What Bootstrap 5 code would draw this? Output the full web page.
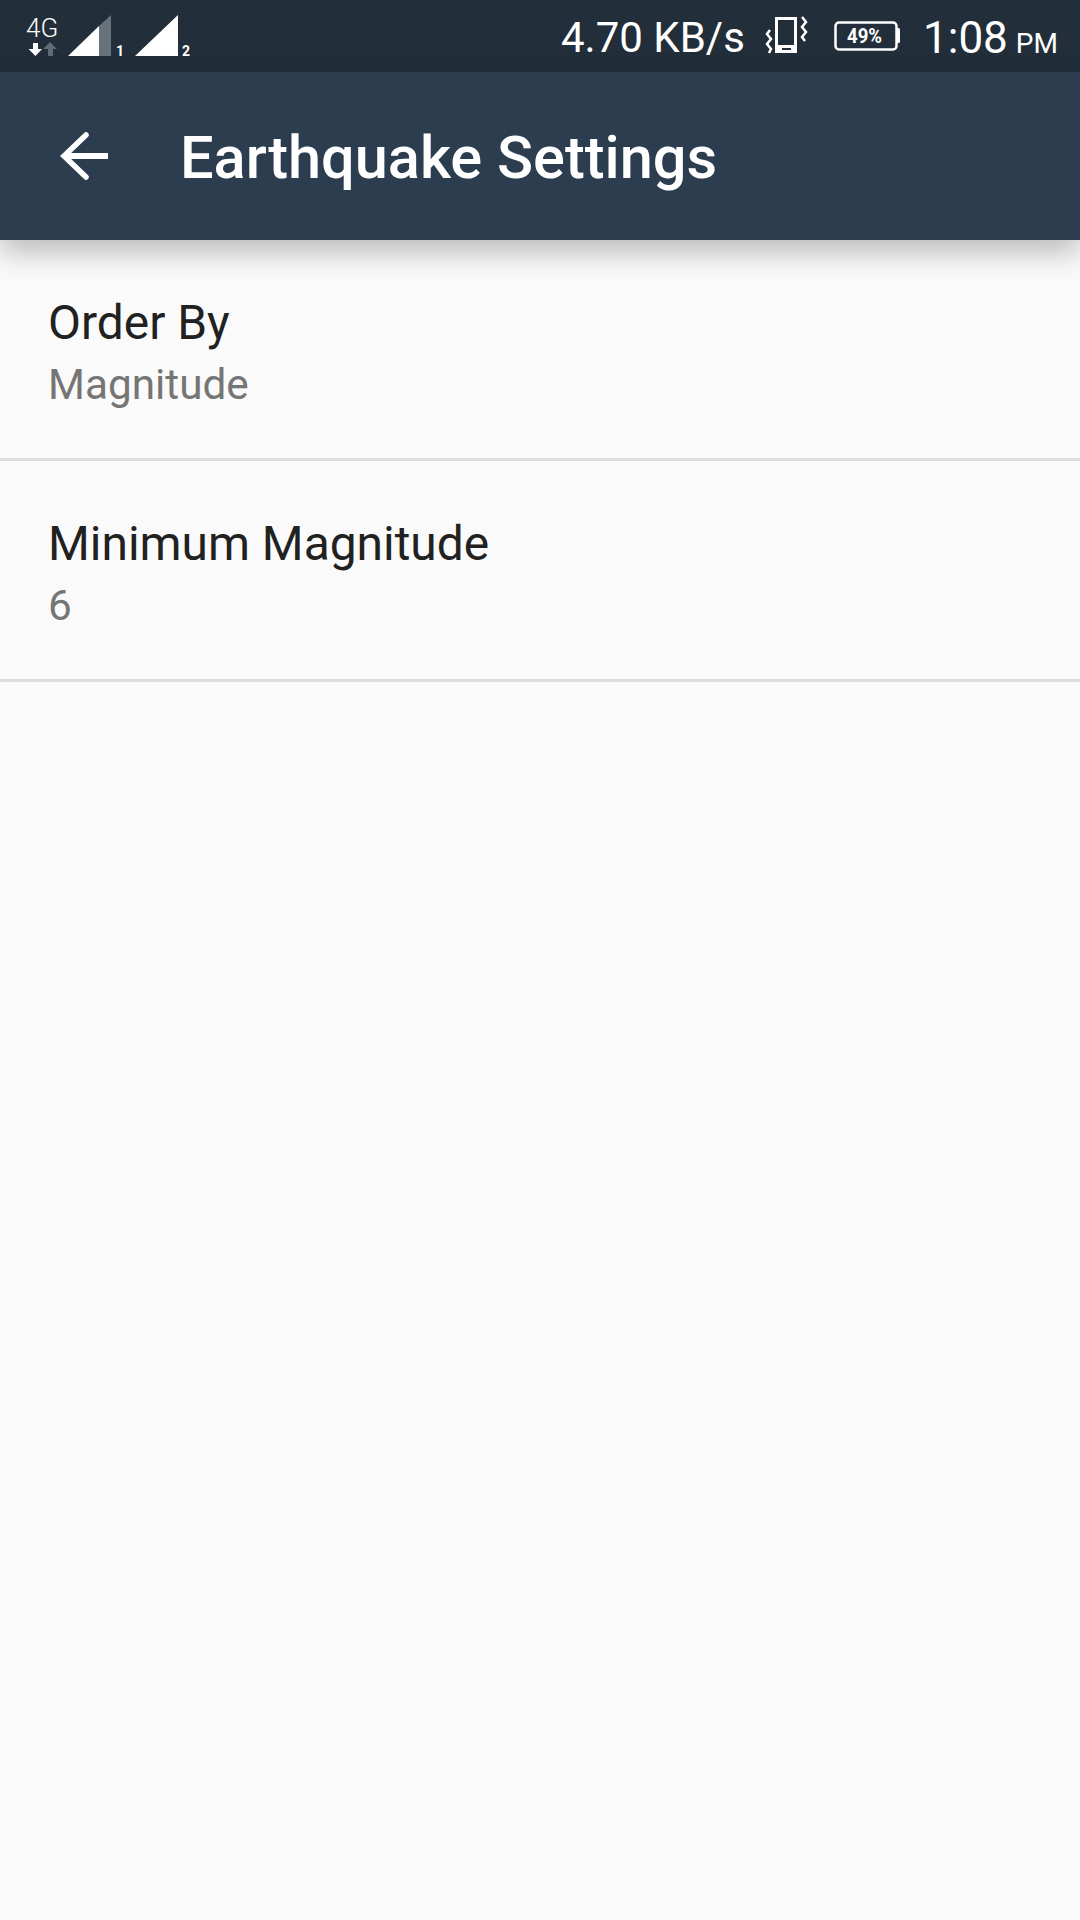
<!DOCTYPE html>
<html lang="en">
  <head>
    <meta charset="UTF-8" />
    <title>Earthquake Settings</title>
    <link
      href="https://cdn.jsdelivr.net/npm/bootstrap@5.3.3/dist/css/bootstrap.min.css"
      rel="stylesheet"
    />
    <style>
      body {
        width: 1080px;
        height: 1920px;
        overflow: hidden;
        background: #fafafa;
        font-family: Roboto, "Liberation Sans", sans-serif;
      }
      .status-strip {
        height: 72px;
        background: #222f3a;
        color: #fff;
      }
      .speed-text {
        font-size: 42px;
        font-weight: 400;
        line-height: 1;
        margin-left: 561px;
        margin-top: 4px;
        width: 203px;
      }
      .clock-text {
        font-size: 44px;
        font-weight: 400;
        line-height: 1;
        margin-left: 21px;
        margin-top: 4px;
      }
      .clock-text span {
        font-size: 28px;
        margin-left: 8px;
      }
      .app-toolbar {
        height: 168px;
        background: #2b3d4e;
        box-shadow: 0 12px 28px rgba(0, 0, 0, 0.26);
        position: relative;
        padding-left: 60px;
      }
      .toolbar-title {
        font-size: 59.5px;
        font-weight: 500;
        color: #fff;
        margin: 5px 0 0 72px;
        line-height: 1;
      }
      .pref-row {
        height: 221px;
        padding: 51px 0 0 48px;
        background: transparent;
        border: 0;
        border-bottom: 3px solid #dedede;
      }
      .pref-title {
        font-size: 47.9px;
        line-height: 64px;
        color: #212121;
      }
      .pref-value {
        font-size: 42.3px;
        line-height: 59px;
        color: #757575;
      }
    </style>
  </head>
  <body>
    <div class="status-strip d-flex align-items-center position-relative">
      <svg class="position-absolute top-0 start-0" width="200" height="72" viewBox="0 0 200 72">
        <text x="26" y="37" font-family="Roboto" font-size="26" font-weight="300" fill="#fff">4G</text>
        <path d="M33 43h5v6h4l-6.500 7-7-7h4.500z" fill="#fff" />
        <path d="M48 56h5v-7h4l-7-7-7 7h5z" fill="#5f6b75" />
        <path d="M68 56L99 26V56z" fill="#fff" />
        <path d="M99 26L111 15V56H99z" fill="#67727b" />
        <text x="116" y="56" font-family="Roboto" font-size="14" font-weight="700" fill="#fff">1</text>
        <path d="M135 56L178 15V56z" fill="#fff" />
        <text x="182" y="56" font-family="Roboto" font-size="14" font-weight="700" fill="#fff">2</text>
      </svg>
      <div class="speed-text">4.70 KB/s</div>
      <svg width="44" height="40" viewBox="0 0 44 40" fill="none">
        <rect x="12.500" y="2.500" width="19" height="33" stroke="#fff" stroke-width="3" />
        <rect x="11" y="29" width="22" height="8" fill="#fff" />
        <rect x="18" y="32" width="9" height="2" fill="#222f3a" />
        <path d="M6 14L3 18l4 5-4 5 4 5-2 4" stroke="#fff" stroke-width="2.500" />
        <path d="M38 1l4 5-4 5 4 5-4 5 3 4" stroke="#fff" stroke-width="2.500" />
      </svg>
      <svg class="ms-4" width="70" height="32" viewBox="0 0 70 32">
        <rect x="3.500" y="2.500" width="61" height="27" rx="3.500" fill="none" stroke="#fff" stroke-width="2.500" />
        <path d="M65 8h1.500a1.500 1.500 0 0 1 1.500 1.500v12a1.500 1.500 0 0 1-1.500 1.500H65z" fill="#fff" />
        <text x="15" y="23" font-family="Roboto" font-size="21" font-weight="700" fill="#fff" textLength="35" lengthAdjust="spacingAndGlyphs">49%</text>
      </svg>
      <div class="clock-text">1:08<span>PM</span></div>
    </div>

    <div class="app-toolbar d-flex align-items-center">
      <svg width="48" height="48" viewBox="0 0 48 48" fill="none">
        <path d="M48 24H5" stroke="#fff" stroke-width="6" />
        <path d="M26 3L4 24l22 21" stroke="#fff" stroke-width="5.500" stroke-linecap="round" />
      </svg>
      <h1 class="toolbar-title">Earthquake Settings</h1>
    </div>

    <div class="list-group rounded-0">
      <div class="list-group-item pref-row">
        <div class="pref-title">Order By</div>
        <div class="pref-value">Magnitude</div>
      </div>
      <div class="list-group-item pref-row">
        <div class="pref-title">Minimum Magnitude</div>
        <div class="pref-value">6</div>
      </div>
    </div>
  </body>
</html>
